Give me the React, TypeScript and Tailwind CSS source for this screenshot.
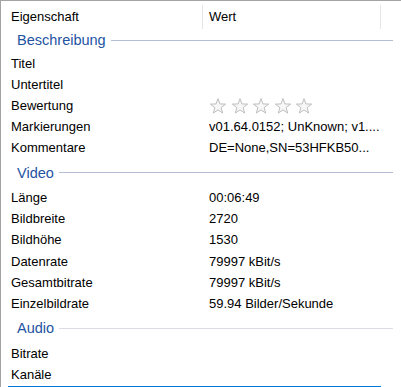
import React from 'react';

type Row = {
    label: string;
    value?: string;
    stars?: boolean;
};

type Group = {
    title: string;
    lineColor: string;
    rows: Row[];
};

const groups: Group[] = [
    {
        title: 'Beschreibung',
        lineColor: 'bg-[#b3bdd3]',
        rows: [
            { label: 'Titel' },
            { label: 'Untertitel' },
            { label: 'Bewertung', stars: true },
            { label: 'Markierungen', value: 'v01.64.0152; UnKnown; v1....' },
            { label: 'Kommentare', value: 'DE=None,SN=53HFKB50...' },
        ],
    },
    {
        title: 'Video',
        lineColor: 'bg-[#b3bdd3]',
        rows: [
            { label: 'Länge', value: '00:06:49' },
            { label: 'Bildbreite', value: '2720' },
            { label: 'Bildhöhe', value: '1530' },
            { label: 'Datenrate', value: '79997 kBit/s' },
            { label: 'Gesamtbitrate', value: '79997 kBit/s' },
            { label: 'Einzelbildrate', value: '59.94 Bilder/Sekunde' },
        ],
    },
    {
        title: 'Audio',
        lineColor: 'bg-[#dadde6]',
        rows: [{ label: 'Bitrate' }, { label: 'Kanäle' }],
    },
];

const Star = () => (
    <svg width="16" height="16" viewBox="0 0 16 16" className="shrink-0">
        <polygon
            points="8,0.6 9.94,5.93 15.61,6.13 11.14,9.62 12.7,15.07 8,11.9 3.3,15.07 4.86,9.62 0.39,6.13 6.06,5.93"
            fill="#f7f7f7"
            stroke="#bdbdbd"
            strokeWidth="1"
            strokeLinejoin="round"
        />
    </svg>
);

const App = () => {
    return (
        <div
            className="w-[401px] h-[387px] overflow-hidden bg-white border-l border-t border-[#a3a3a3] text-[13px] text-black"
            style={{ fontFamily: '"Liberation Sans", Arial, sans-serif' }}
        >
            {/* header */}
            <div className="flex h-[27px] pt-[4px] items-center">
                <div className="w-[201px] pl-[10px]">Eigenschaft</div>
                <div className="w-px h-[24px] bg-[#e5e5e5]" />
                <div className="w-[177px] pl-[6px]">Wert</div>
                <div className="w-px h-[24px] bg-[#e5e5e5]" />
            </div>

            {groups.map((group, gi) => (
                <div key={group.title}>
                    <div className={`flex items-center pl-[16px] pr-[8px] ${gi === 0 ? 'h-[25px]' : 'h-[29px]'}`}>
                        <span className="text-[14.5px] text-[#2354a2] leading-none">{group.title}</span>
                        <div className={`flex-1 h-px ml-[5px] ${group.lineColor}`} />
                    </div>
                    {group.rows.map((row) => (
                        <div key={row.label} className="flex h-[21.1px] items-center whitespace-nowrap">
                            <div className="w-[208px] pl-[10px]">{row.label}</div>
                            <div className="w-[172px] overflow-hidden">
                                {row.stars ? (
                                    <div className="flex gap-[5.5px] pl-[1px]">
                                        <Star />
                                        <Star />
                                        <Star />
                                        <Star />
                                        <Star />
                                    </div>
                                ) : (
                                    row.value
                                )}
                            </div>
                        </div>
                    ))}
                </div>
            ))}

            {/* selected row, cut off at the bottom */}
            <div className="ml-[7px] mt-[1px] w-[373px] h-[21px] bg-[#0078d7]" />
        </div>
    );
};

export default App;
